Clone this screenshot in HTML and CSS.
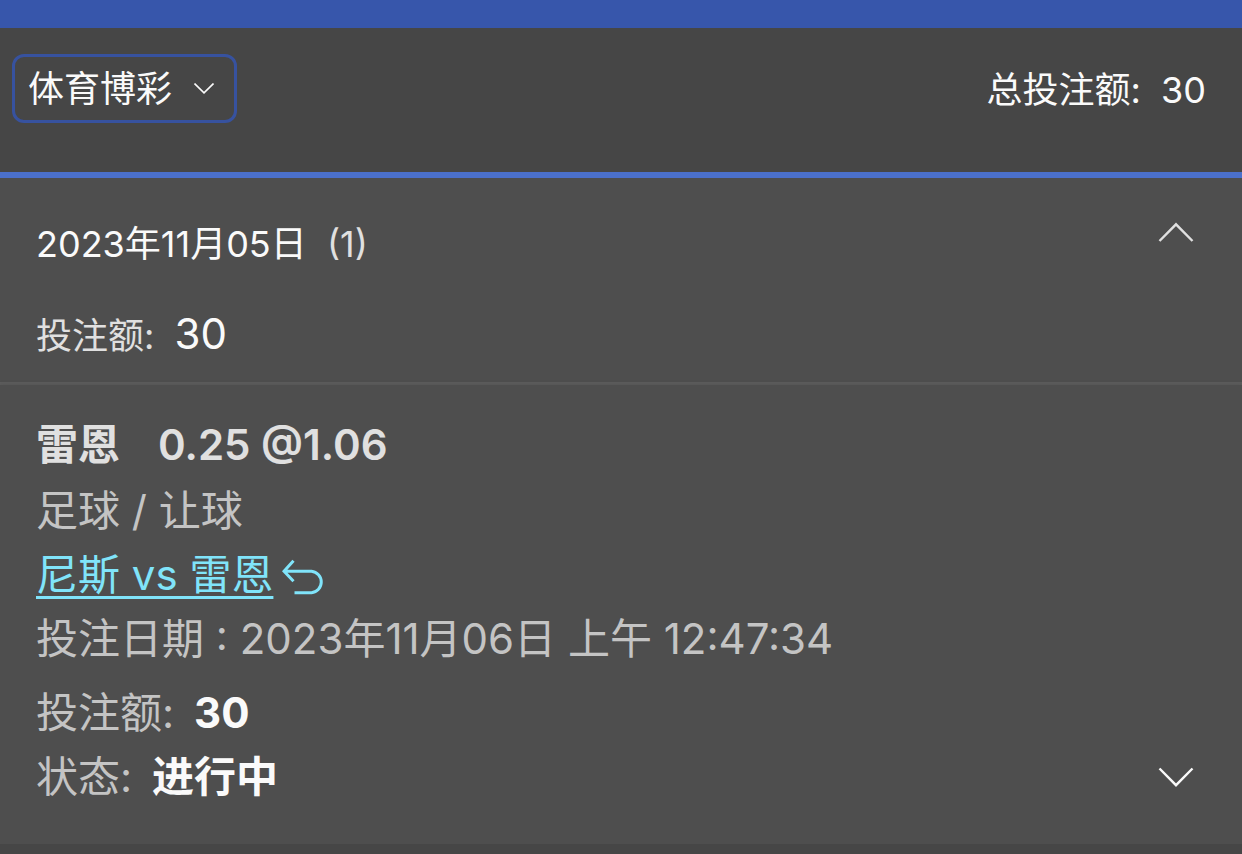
FILE: index.html
```html
<!DOCTYPE html>
<html lang="zh-CN">
<head>
    <meta charset="UTF-8">
    <meta name="viewport" content="width=device-width, initial-scale=1.0">
    <title>投注记录</title>
    <link rel="stylesheet" href="styles.css">
</head>
<body>
    <div class="top-bar"></div>

    <header class="filter-bar">
        <div class="select-box">
            <select class="sport-select" aria-label="类别">
                <option>体育博彩</option>
            </select>
            <svg class="select-arrow" viewBox="0 0 20 11" aria-hidden="true">
                <path d="M0.5 0.5 L10 9.8 L19.5 0.5" />
            </svg>
        </div>
        <p class="total">总投注额: <span class="total-value">30</span></p>
    </header>

    <main>
        <section class="day">
            <div class="day-text">
                <h2 class="day-date">2023年11月05日 <span class="day-count">(1)</span></h2>
                <p class="day-stake">投注额: <span class="day-value">30</span></p>
            </div>
            <button class="toggle" type="button" aria-label="收起">
                <svg class="arrow" viewBox="0 0 36 20" aria-hidden="true">
                    <path d="M1.5 19 L18 2.3 L34.5 19" />
                </svg>
            </button>
        </section>

        <article class="bet">
            <div class="bet-text">
                <h3 class="bet-pick"><span>雷恩</span><span>0.25 @1.06</span></h3>
                <p>足球 / 让球</p>
                <p class="match">
                    <a class="match-link" href="#">尼斯 vs 雷恩</a>
                    <svg class="return-icon" viewBox="0 -4 42 40" aria-hidden="true">
                        <path d="M11.5 1.8 L2 12.3 L11.5 22.3 M2 12.3 H29.5 A10.8 10.8 0 0 1 29.5 33.8 H12.5" />
                    </svg>
                </p>
                <p>投注日期 : 2023年11月06日 上午 12:47:34</p>
                <dl class="bet-info">
                    <div class="info-row">
                        <dt>投注额:</dt>
                        <dd>30</dd>
                    </div>
                    <div class="info-row">
                        <dt>状态:</dt>
                        <dd>进行中</dd>
                    </div>
                </dl>
            </div>
            <button class="toggle" type="button" aria-label="展开">
                <svg class="arrow arrow-down" viewBox="0 0 36 20" aria-hidden="true">
                    <path d="M1.5 1.5 L18 18.2 L34.5 1.5" />
                </svg>
            </button>
        </article>
    </main>
</body>
</html>
```
FILE: styles.css
```css
*{
    margin: 0;
    padding: 0;
    box-sizing: border-box;
}

body{
    background: #464646;
    color: #c4c4c4;
    font-family: Inter, "Noto Sans CJK SC", sans-serif;
    font-size: 42px;
    line-height: 64px;
}

.top-bar{
    height: 28px;
    background: #3756ab;
}

/* filter bar */
.filter-bar{
    display: flex;
    justify-content: space-between;
    align-items: flex-start;
    padding: 26px 36px 49px 12px;
    border-bottom: 6px solid #4b70cb;
    background: #464646;
    color: #fafafa;
    font-size: 36px;
}

.select-box{
    display: grid;
    align-items: center;
}

.sport-select{
    grid-area: 1 / 1;
    appearance: none;
    width: 225px;
    height: 69px;
    padding: 0 48px 0 13px;
    border: 3px solid #37529f;
    border-radius: 12px;
    background: transparent;
    color: inherit;
    font: inherit;
}

.select-arrow{
    grid-area: 1 / 1;
    justify-self: end;
    width: 20px;
    height: 11px;
    margin-right: 23px;
    pointer-events: none;
    fill: none;
    stroke: #fafafa;
    stroke-width: 1.6;
}

.total{
    padding-top: 4px;
}

.total-value{
    margin-left: 10px;
}

/* day summary */
.day{
    display: flex;
    justify-content: space-between;
    align-items: flex-start;
    padding: 34px 48px 14px 36px;
    border-bottom: 3px solid #5c5c5c;
    background: #4e4e4e;
    color: #e0e0e0;
    font-size: 36px;
}

.day-text{
    display: grid;
    gap: 26px;
}

.day-date{
    color: #fafafa;
    font-size: 36px;
    font-weight: 400;
}

.day-count{
    margin-left: 10px;
    color: #e0e0e0;
}

.day-value{
    margin-left: 10px;
    color: #fafafa;
    font-size: 42px;
}

.toggle{
    display: flex;
    padding: 10px 0;
    border: none;
    background: none;
    cursor: pointer;
}

.arrow{
    width: 36px;
    height: 20px;
    fill: none;
    stroke: #e0e0e0;
    stroke-width: 2.4;
}

.arrow-down{
    stroke: #fafafa;
}

/* bet card */
.bet{
    display: flex;
    justify-content: space-between;
    align-items: flex-end;
    padding: 28px 48px 35px 36px;
    background: #4e4e4e;
    box-shadow: 0 2px 6px rgba(0, 0, 0, 0.25);
}

.bet .toggle{
    margin-bottom: 12px;
}

.bet-pick{
    display: flex;
    gap: 38px;
    padding-bottom: 2px;
    color: #e0e0e0;
    font-size: 42px;
    font-weight: 600;
}

.match{
    display: flex;
    align-items: center;
    gap: 9px;
}

.match-link{
    color: #80e4fa;
    text-decoration-thickness: 3px;
    text-underline-offset: 6px;
}

.return-icon{
    width: 42px;
    height: 40px;
    fill: none;
    stroke: #80e4fa;
    stroke-width: 3;
}

.bet-info{
    padding-top: 10px;
}

.info-row{
    display: flex;
    gap: 20px;
}

.info-row dd{
    color: #fafafa;
    font-weight: 700;
}
```
